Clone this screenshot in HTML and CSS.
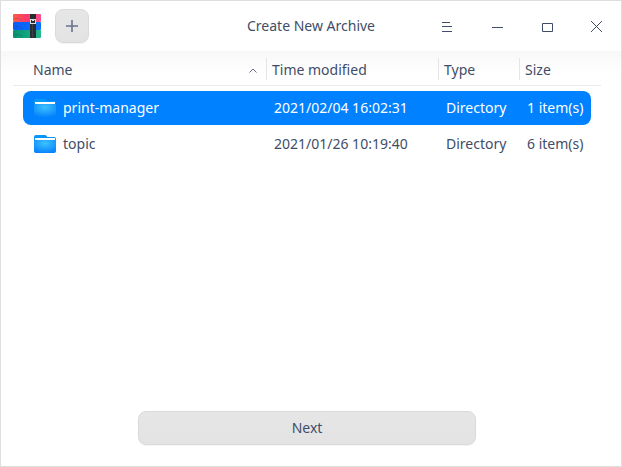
FILE: index.html
```html
<!DOCTYPE html>
<html lang="en">
<head>
<meta charset="utf-8">
<title>Create New Archive</title>
<link rel="stylesheet" href="styles.css">
</head>
<body>
<svg class="defs" width="0" height="0" aria-hidden="true">
  <defs>
    <linearGradient id="red"><stop offset="0" stop-color="#fb5c45"/><stop offset=".5" stop-color="#fa3a6c"/><stop offset="1" stop-color="#ff4e8e"/></linearGradient>
    <linearGradient id="blue"><stop offset="0" stop-color="#0a5cf5"/><stop offset="1" stop-color="#0f74ff"/></linearGradient>
    <linearGradient id="green"><stop offset="0" stop-color="#079070"/><stop offset="1" stop-color="#20b88c"/></linearGradient>
    <radialGradient id="folder-face" cx=".5" cy=".25" r=".8"><stop offset="0" stop-color="#3cc2ff"/><stop offset="1" stop-color="#0480fb"/></radialGradient>
    <symbol id="folder" viewBox="0 0 22 18">
      <path d="M0 2Q0 0 2 0h9q1 0 1.500 .8l.7 1.200H20q2 0 2 2v8H0z" fill="#0797f7"/>
      <path d="M1 3h20v4H1z" fill="#fff"/>
      <path d="M0 5h22v11q0 2-2 2H2q-2 0-2-2z" fill="url(#folder-face)"/>
    </symbol>
  </defs>
</svg>
<main class="window">
  <header class="titlebar">
    <div class="tools">
      <svg class="logo" viewBox="0 0 28 24">
        <rect width="28" height="8" rx="1" fill="url(#red)"/>
        <rect y="8" width="28" height="8" rx="1" fill="url(#blue)"/>
        <rect y="16" width="28" height="8" rx="1" fill="url(#green)"/>
        <path d="M2 4.500h4M7 5.500h2M2 12.500h4M7 13.500h2M2 20.500h4M7 21.500h2" stroke="#252b50" stroke-opacity=".22"/>
        <path d="M17 0h6v24h-6z" fill="#292d34"/>
        <path d="M19.500 10v14" stroke="#3c4047"/>
        <rect x="17" y="5" width="6" height="5" fill="#ddd"/>
        <path d="M18 6h1v1h2v-1h1v3h-4z" fill="#292d34"/>
      </svg>
      <button class="add" aria-label="Add"><svg width="12" height="12" viewBox="0 0 12 12"><path d="M5.200 0h1.600v5.200H12v1.600H6.800V12H5.200V6.800H0V5.200h5.200z" fill="#66738c"/></svg></button>
    </div>
    <h1 class="title">Create New Archive</h1>
    <nav class="controls">
      <svg viewBox="0 0 50 50"><path d="M21 21.500h8M21 25.500h10M21 30.500h10"/></svg>
      <svg viewBox="0 0 50 50"><path d="M21 26.500h11"/></svg>
      <svg viewBox="0 0 50 50"><path d="M21.500 22.500h10v8h-10z"/></svg>
      <svg viewBox="0 0 50 50"><path d="M20 20l11 11M31 20l-11 11"/></svg>
    </nav>
  </header>
  <section class="content">
    <div class="columns">
      <span class="name">Name <svg class="sort" width="8" height="5" viewBox="0 0 8 5"><path d="M.5 4.500L4 1l3.500 3.500"/></svg></span>
      <span>Time modified</span><span>Type</span><span>Size</span>
    </div>
    <div class="rows">
      <div class="row selected"><span class="file"><svg><use href="#folder"/></svg>print-manager</span><span>2021/02/04 16:02:31</span><span>Directory</span><span>1 item(s)</span></div>
      <div class="row"><span class="file"><svg><use href="#folder"/></svg>topic</span><span>2021/01/26 10:19:40</span><span>Directory</span><span>6 item(s)</span></div>
    </div>
    <button class="next">Next</button>
  </section>
</main>
</body>
</html>
```
FILE: styles.css
```css
* { box-sizing: border-box; }
body {
  margin: 0;
  font: 14px/20px "Noto Sans", sans-serif;
  color: #414d68;
}
.defs { display: block; }
.window {
  width: 622px;
  height: 467px;
  border: 1px solid #dedede;
  background: #fff;
  display: flex;
  flex-direction: column;
  overflow: hidden;
}
.titlebar {
  height: 50px;
  flex: none;
  display: grid;
  grid-template-columns: 200px 220px 200px;
  align-items: center;
}
.tools { display: flex; align-items: center; gap: 14px; padding-left: 12px; }
.logo { width: 28px; height: 24px; }
button {
  border: 1px solid #dadada;
  border-radius: 8px;
  background: linear-gradient(#e6e6e6, #e3e3e3);
  color: inherit;
  font: inherit;
  padding: 0;
  box-shadow: 0 1px 1px rgba(0, 0, 0, .05);
}
.add { width: 34px; height: 34px; display: grid; place-items: center; }
.title { margin: 0; font-size: 14px; font-weight: 400; text-align: center; }
.controls { display: flex; }
.controls svg { width: 50px; height: 50px; fill: none; stroke: #414d68; stroke-width: 1; }
.content {
  flex: 1;
  display: flex;
  flex-direction: column;
  background: linear-gradient(#f8f8f8, #fff 24px);
}
.columns {
  height: 35px;
  margin: 0 20px 0 12px;
  border-bottom: 1px solid #e9e9e9;
  display: grid;
  grid-template-columns: 253px 172px 81px 1fr;
  align-content: start;
  padding-top: 7px;
}
.columns span { height: 22px; line-height: 23px; padding-left: 5px; border-left: 1px solid #e5e5e5; }
.columns .name {
  display: flex;
  align-items: center;
  justify-content: space-between;
  padding: 0 9px 0 20px;
  border: 0;
}
.sort { fill: none; stroke: #66718b; margin-top: 2px; }
.rows { display: flex; flex-direction: column; gap: 2px; padding: 5px 30px 0 22px; }
.row {
  height: 34px;
  border-radius: 8px;
  display: grid;
  grid-template-columns: 251px 172px 81px 1fr;
  align-items: center;
}
.row.selected { background: #0081ff; color: #fff; }
.file { display: flex; align-items: center; gap: 7px; padding-left: 11px; }
.file svg { width: 22px; height: 18px; }
.next { width: 338px; height: 34px; margin: auto auto 21px 137px; }
```
